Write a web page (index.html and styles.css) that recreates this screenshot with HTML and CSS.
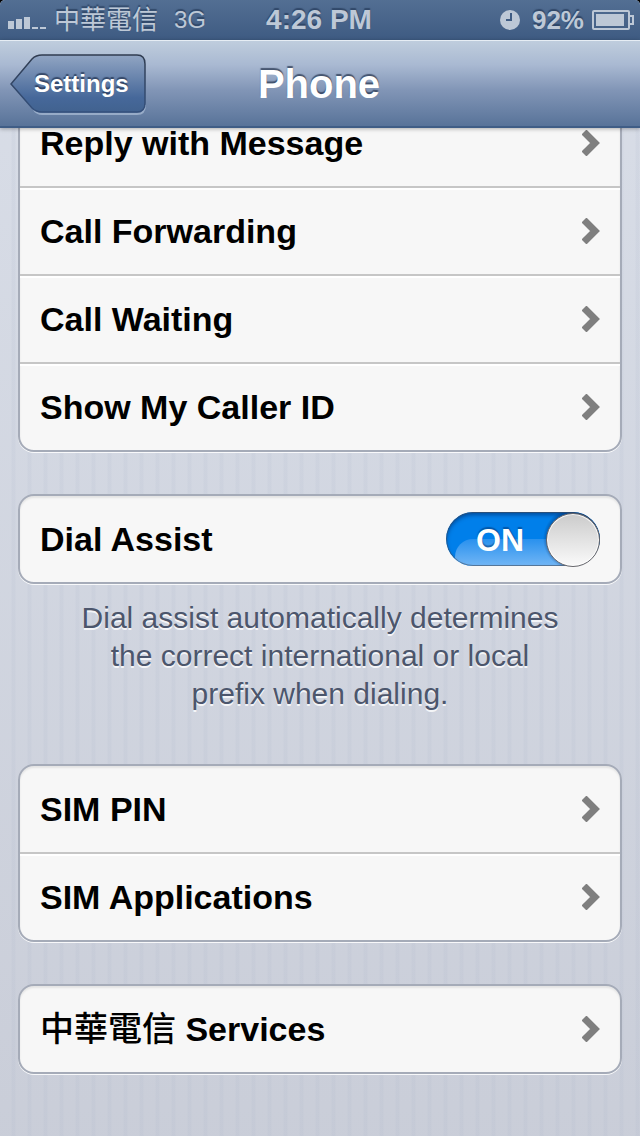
FILE: index.html
```html
<!DOCTYPE html>
<html lang="en">
<head>
<meta charset="utf-8">
<meta name="viewport" content="width=device-width, initial-scale=1">
<title>Phone</title>
<link rel="stylesheet" href="styles.css">
</head>
<body>
<div class="screen">
  <div class="status">
    <div class="status-left">
      <svg class="signal" width="38" height="14" viewBox="0 0 38 14" aria-hidden="true">
        <path d="M0 5h6v8H0zM8 3h6v10H8zM16 1h6v12h-6zM24 11h6v2h-6zM32 11h6v2h-6z"/>
      </svg>
      <span class="carrier">中華電信</span>
      <span class="network">3G</span>
    </div>
    <time class="clock">4:26 PM</time>
    <div class="status-right">
      <svg class="alarm" width="20" height="20" viewBox="0 0 20 20" aria-hidden="true">
        <circle cx="10" cy="10" r="10"/>
        <path class="alarm-hands" d="M11 3v7H6"/>
      </svg>
      <span class="percent">92%</span>
      <svg class="battery" width="42" height="20" viewBox="0 0 42 20" aria-hidden="true">
        <rect class="battery-line" x="1" y="1" width="36" height="18" rx="1"/>
        <path class="battery-line" d="M38 6h3v8h-3"/>
        <rect x="4" y="4" width="28" height="12"/>
      </svg>
    </div>
  </div>

  <header class="navbar">
    <button class="back" type="button">
      <svg class="back-shape" width="138" height="62" viewBox="0 0 138 62" aria-hidden="true">
        <defs>
          <linearGradient id="back-fill" x1="0" y1="0" x2="0" y2="1">
            <stop offset="0" stop-color="#91a5c3"/>
            <stop offset=".5" stop-color="#5f7ca7"/>
            <stop offset=".75" stop-color="#46689a"/>
            <stop offset="1" stop-color="#41628f"/>
          </linearGradient>
          <linearGradient id="back-edge" x1="0" y1="0" x2="0" y2="1">
            <stop offset="0" stop-color="#303c50"/>
            <stop offset="1" stop-color="#34507c"/>
          </linearGradient>
        </defs>
        <path class="back-glow" d="M24 56Q27 60 32 60H127Q135 60 135 51"/>
        <path fill="url(#back-fill)" stroke="url(#back-edge)" stroke-width="1.5" d="M22 5Q26 1 32 1H127Q135 1 135 10V49Q135 58 127 58H32Q26 58 22 54L1 30Z"/>
      </svg>
      <span class="back-label">Settings</span>
    </button>
    <h1 class="title">Phone</h1>
  </header>

  <main class="content">
    <section class="group group-continued">
      <button class="row" type="button"><span>Reply with Message</span><svg class="chevron" width="18" height="26" viewBox="0 0 18 26" aria-hidden="true"><path d="M2 2L13 13L2 24"/></svg></button>
      <button class="row" type="button"><span>Call Forwarding</span><svg class="chevron" width="18" height="26" viewBox="0 0 18 26" aria-hidden="true"><path d="M2 2L13 13L2 24"/></svg></button>
      <button class="row" type="button"><span>Call Waiting</span><svg class="chevron" width="18" height="26" viewBox="0 0 18 26" aria-hidden="true"><path d="M2 2L13 13L2 24"/></svg></button>
      <button class="row" type="button"><span>Show My Caller ID</span><svg class="chevron" width="18" height="26" viewBox="0 0 18 26" aria-hidden="true"><path d="M2 2L13 13L2 24"/></svg></button>
    </section>

    <section class="group">
      <div class="row">
        <label for="dial-assist">Dial Assist</label>
        <div class="switch">
          <input class="switch-input" type="checkbox" role="switch" id="dial-assist" checked>
          <span class="switch-text" aria-hidden="true">ON</span>
        </div>
      </div>
    </section>
    <p class="note">Dial assist automatically determines the correct international or local prefix when dialing.</p>

    <section class="group">
      <button class="row" type="button"><span>SIM PIN</span><svg class="chevron" width="18" height="26" viewBox="0 0 18 26" aria-hidden="true"><path d="M2 2L13 13L2 24"/></svg></button>
      <button class="row" type="button"><span>SIM Applications</span><svg class="chevron" width="18" height="26" viewBox="0 0 18 26" aria-hidden="true"><path d="M2 2L13 13L2 24"/></svg></button>
    </section>

    <section class="group">
      <button class="row" type="button"><span><span class="han">中華電信</span> Services</span><svg class="chevron" width="18" height="26" viewBox="0 0 18 26" aria-hidden="true"><path d="M2 2L13 13L2 24"/></svg></button>
    </section>
  </main>
</div>
</body>
</html>
```

FILE: styles.css
```css
* {
  box-sizing: border-box;
}

body {
  margin: 0;
  background: #000;
  font-family: "Liberation Sans", "Noto Sans CJK TC", sans-serif;
}

.screen {
  display: flex;
  flex-direction: column;
  min-height: 100vh;
  overflow: hidden;
  border-radius: 5px;
  background:
    repeating-linear-gradient(90deg, transparent 0 11px, rgba(160, 172, 196, 0.1) 12px 15px, transparent 16px),
    linear-gradient(#d9dee8, #c9cdd8);
}

/* Status bar */
.status {
  display: grid;
  grid-template-columns: 1fr auto 1fr;
  align-items: center;
  height: 40px;
  padding: 0 6px 0 8px;
  background: linear-gradient(#536f93, #3e5b82);
  color: #bdc8d6;
  fill: #bdc8d6;
  text-shadow: 0 -2px 1px rgba(30, 50, 80, 0.6);
}

.status-left,
.status-right {
  display: flex;
  align-items: center;
}

.status-right {
  justify-content: flex-end;
}

.signal {
  margin: 6px 8px 0 0;
}

.carrier {
  margin-right: 16px;
  font-size: 26px;
  line-height: 40px;
}

.network {
  font-size: 24px;
  line-height: 40px;
}

.clock {
  margin-right: 4px;
  font-size: 28px;
  font-weight: bold;
  line-height: 40px;
}

.alarm {
  margin-right: 12px;
}

.alarm-hands {
  fill: none;
  stroke: #3f5c83;
  stroke-width: 2;
}

.percent {
  margin-right: 8px;
  font-size: 26px;
  font-weight: bold;
  line-height: 40px;
}

.battery-line {
  fill: none;
  stroke: #bdc8d6;
  stroke-width: 2;
}

/* Navigation bar */
.navbar {
  position: relative;
  z-index: 1;
  display: grid;
  grid-template-columns: 1fr auto 1fr;
  align-items: center;
  height: 88px;
  padding: 0 12px 0 10px;
  border-top: 1px solid #e6edf4;
  border-bottom: 2px solid #3f5d86;
  background: linear-gradient(#bfcddd, #a9b9d2 28%, #8195b6 58%, #587399);
  box-shadow: 0 1px 4px rgba(0, 0, 0, 0.3);
}

.back {
  position: relative;
  justify-self: start;
  height: 60px;
  padding: 0 18px 0 24px;
  border: 0;
  background: none;
  color: #fff;
  font: bold 24px/58px "Liberation Sans", sans-serif;
  text-shadow: 0 -2px 1px rgba(30, 45, 75, 0.7);
}

.back-shape {
  position: absolute;
  top: 0;
  left: 0;
}

.back-glow {
  fill: none;
  stroke: rgba(200, 215, 235, 0.5);
  stroke-width: 2;
}

.back-label {
  position: relative;
}

.title {
  margin: 0;
  color: #fff;
  font-size: 40px;
  line-height: 84px;
  text-shadow: 0 -2px 1px rgba(40, 55, 80, 0.75);
}

/* Settings list */
.content {
  display: flex;
  flex-direction: column;
  padding: 0 18px 62px;
}

.group {
  margin-bottom: 42px;
  overflow: hidden;
  border: 2px solid #a5abb8;
  border-radius: 16px;
  background: #f7f7f7;
  box-shadow: 0 1px 0 rgba(255, 255, 255, 0.85), inset 0 2px 2px rgba(0, 0, 0, 0.08);
}

/* The list is scrolled so that its first rows lie under the navigation bar. */
.group-continued {
  margin-top: -30px;
}

.row {
  display: flex;
  align-items: center;
  justify-content: space-between;
  width: 100%;
  height: 86px;
  padding: 0 20px;
  border: 0;
  background: none;
  color: #000;
  font: bold 34px/40px "Liberation Sans", "Noto Sans CJK TC", sans-serif;
  text-align: left;
}

.row + .row {
  height: 88px;
  border-top: 2px solid #c6c6c6;
  box-shadow: inset 0 2px 0 #fff;
}

.han {
  font-weight: 500;
}

.chevron {
  fill: none;
  stroke: #7f7f7f;
  stroke-width: 7;
}

.note {
  margin: -27px 52px 51px;
  color: #4c566c;
  font-size: 30px;
  line-height: 38px;
  text-align: center;
  text-shadow: 0 2px 0 rgba(255, 255, 255, 0.8);
}

/* Toggle */
.switch {
  position: relative;
  width: 154px;
  height: 54px;
}

.switch-input {
  appearance: none;
  position: relative;
  display: block;
  width: 100%;
  height: 100%;
  margin: 0;
  overflow: hidden;
  border-radius: 27px;
  background: #007fea;
}

.switch-input::before {
  content: "";
  position: absolute;
  top: 27px;
  left: 9px;
  width: 140px;
  height: 50px;
  border-radius: 18px;
  background: linear-gradient(#2991ee, #72b6f5 27px);
}

.switch-input::after {
  content: "";
  position: absolute;
  inset: 0;
  border-radius: 27px;
  background: radial-gradient(circle at 128px 27px, #0000 24px, rgba(0, 30, 80, 0.5) 25px, #0000 31px);
  box-shadow: inset 0 0 0 1px rgba(70, 80, 95, 0.6), inset 0 3px 4px rgba(0, 40, 100, 0.6);
}

.switch::after {
  content: "";
  position: absolute;
  top: 1px;
  right: 0;
  width: 52px;
  height: 52px;
  border: 1px solid #66666b;
  border-radius: 50%;
  background: linear-gradient(#cbcbcb, #fafafa);
  box-shadow: inset 0 0 0 1px rgba(255, 255, 255, 0.8);
  pointer-events: none;
}

.switch-text {
  position: absolute;
  top: 0;
  left: 30px;
  color: #fff;
  font-size: 32px;
  line-height: 56px;
  text-shadow: 0 -2px 1px rgba(0, 50, 110, 0.5);
  pointer-events: none;
}
```
